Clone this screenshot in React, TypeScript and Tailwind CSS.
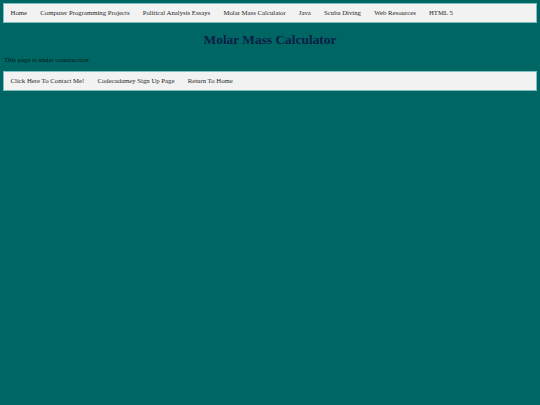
const topLinks = [
  'Home',
  'Computer Programming Projects',
  'Political Analysis Essays',
  'Molar Mass Calculator',
  'Java',
  'Scuba Diving',
  'Web Resources',
  'HTML 5',
]

const bottomLinks = ['Click Here To Contact Me!', 'Codecadamey Sign Up Page', 'Return To Home']

function NavBar({ links }: { links: string[] }) {
  return (
    <ul className="mx-[3px] flex h-[20px] items-center border border-[#7fbfbf] bg-[#f2f2f2]">
      {links.map((link) => (
        <li key={link}>
          <a href="#" className="block px-[6.6px] text-[6.75px] text-[#1f1f1f]">
            {link}
          </a>
        </li>
      ))}
    </ul>
  )
}

export default function App() {
  return (
    <div className="min-h-[405px] bg-[#006663] pt-[3px] font-['Liberation_Serif',serif]">
      <NavBar links={topLinks} />
      <h1 className="mt-[8px] text-center text-[13.4px] font-bold leading-[18px] text-[#0b1d47]">
        Molar Mass Calculator
      </h1>
      <p className="mt-[6px] px-[4px] text-[6.75px] leading-[10px] text-[#021a1a]">This page is under construction</p>
      <div className="mt-[6px]">
        <NavBar links={bottomLinks} />
      </div>
    </div>
  )
}
